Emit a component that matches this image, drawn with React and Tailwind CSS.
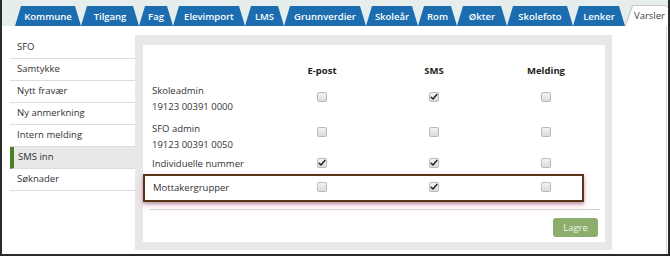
import React from 'react'

const tabs = [
  { label: 'Kommune', w: 'w-[66px]' },
  { label: 'Tilgang', w: 'w-[58px]' },
  { label: 'Fag', w: 'w-[34px]' },
  { label: 'Elevimport', w: 'w-[72px]' },
  { label: 'LMS', w: 'w-[39px]' },
  { label: 'Grunnverdier', w: 'w-[82px]' },
  { label: 'Skoleår', w: 'w-[52px]' },
  { label: 'Rom', w: 'w-[39px]' },
  { label: 'Økter', w: 'w-[50px]' },
  { label: 'Skolefoto', w: 'w-[66px]' },
  { label: 'Lenker', w: 'w-[52px]' },
]

const menu = ['SFO', 'Samtykke', 'Nytt fravær', 'Ny anmerkning', 'Intern melding', 'SMS inn', 'Søknader']

function Box({ checked }) {
  return (
    <span className="block w-[10px] h-[10px] rounded-[2px] border border-[#b9b9b9] bg-gradient-to-b from-[#f4f4f4] to-[#dcdcdc] relative">
      {checked && (
        <svg viewBox="0 0 10 10" className="absolute left-0 top-0 w-[8px] h-[8px]">
          <path d="M1.5 5.2 L3.8 7.6 L8.6 1.8" stroke="#222" strokeWidth="1.8" fill="none" strokeLinecap="round" strokeLinejoin="round" />
        </svg>
      )}
    </span>
  )
}

function Cell({ checked, pad }) {
  return (
    <div className={`w-[112px] shrink-0 flex justify-center ${pad}`}>
      <Box checked={checked} />
    </div>
  )
}

export default function App() {
  return (
    <div className="w-[670px] h-[256px] overflow-hidden bg-white border-l-2 border-r-2 border-b-2 border-[#2a2a2a] font-['Open_Sans',sans-serif] text-[#333] flex flex-col">
      {/* tab bar */}
      <div className="h-[26px] shrink-0 bg-[#e6eded] flex items-end pl-[13px]">
        {tabs.map((t) => (
          <div
            key={t.label}
            className={`${t.w} shrink-0 h-[20px] bg-[#1b6db0] rounded-t-[5px] [clip-path:polygon(6px_0,calc(100%-6px)_0,100%_100%,0_100%)] flex items-center justify-center text-white text-[9.5px] font-semibold leading-none pt-[1px]`}
          >
            {t.label}
          </div>
        ))}
        <div className="w-[44px] shrink-0 h-[21px] bg-[#c9c9c9] rounded-t-[5px] [clip-path:polygon(7px_0,100%_0,100%_100%,0_100%)] pt-[1px] pl-[1px]">
          <div className="w-full h-full bg-white rounded-t-[5px] [clip-path:polygon(7px_0,100%_0,100%_100%,0_100%)] flex items-center justify-center text-[9.5px] text-[#444] pl-[4px]">
            Varsler
          </div>
        </div>
      </div>

      {/* body */}
      <div className="flex flex-1 border-r border-[#d8d8d8] mr-[1px]">
        <div className="w-[125px] shrink-0 ml-[8px] pt-[11px]">
          {menu.map((m) => (
            <div
              key={m}
              className={`h-[22px] flex items-center border-b border-[#dcdcdc] text-[9.5px] ${
                m === 'SMS inn' ? 'bg-[#e8e8e8] border-l-[4px] border-l-[#4d7f25] pl-[4px]' : 'pl-[7px]'
              }`}
            >
              {m}
            </div>
          ))}
        </div>

        <div className="w-[477px] shrink-0 h-[215px] mt-[9px] bg-[#e8e8e8] pt-[10px] pl-[8px] pr-[7px]">
          <div className="h-[197px] bg-white flex flex-col pt-[18px] text-[9.5px]">
            <div className="flex h-[16px] items-center font-bold text-[#222]">
              <div className="w-[123px] shrink-0" />
              <div className="w-[112px] shrink-0 text-center">E-post</div>
              <div className="w-[112px] shrink-0 text-center">SMS</div>
              <div className="w-[112px] shrink-0 text-center">Melding</div>
            </div>

            <div className="flex h-[32px] mt-[4px] leading-[16px]">
              <div className="w-[123px] shrink-0 pl-[9px]">
                <div>Skoleadmin</div>
                <div>19123 00391 0000</div>
              </div>
              <Cell pad="pt-[9px]" />
              <Cell pad="pt-[9px]" checked />
              <Cell pad="pt-[9px]" />
            </div>

            <div className="flex h-[32px] mt-[6px] leading-[16px]">
              <div className="w-[123px] shrink-0 pl-[9px]">
                <div>SFO admin</div>
                <div>19123 00391 0050</div>
              </div>
              <Cell pad="pt-[6px]" />
              <Cell pad="pt-[6px]" />
              <Cell pad="pt-[6px]" />
            </div>

            <div className="flex h-[16px] mt-[3px] leading-[16px]">
              <div className="w-[123px] shrink-0 pl-[9px] whitespace-nowrap">Individuelle nummer</div>
              <Cell pad="pt-[2px]" checked />
              <Cell pad="pt-[2px]" checked />
              <Cell pad="pt-[2px]" />
            </div>

            <div className="flex items-start h-[28px] w-[441px] mt-[2px] border-2 border-[#5a3418] overflow-visible shadow-[0_2px_3px_rgba(0,0,0,0.3),0_3px_8px_rgba(255,120,190,0.35)]">
              <div className="w-[121px] shrink-0 pl-[8px] h-full flex items-center">Mottakergrupper</div>
              <Cell pad="pt-[6px]" />
              <Cell pad="pt-[6px]" checked />
              <Cell pad="pt-[6px]" />
            </div>

            <div className="h-px bg-[#cfcfcf] mt-[7px] ml-[7px] mr-[5px]" />

            <div className="flex justify-end mt-[8px] pr-[7px]">
              <button className="w-[45px] h-[19px] rounded-[3px] bg-[#8dad6c] text-[#eef3e8] text-[9.5px] leading-none">
                Lagre
              </button>
            </div>
          </div>
        </div>
      </div>
    </div>
  )
}
